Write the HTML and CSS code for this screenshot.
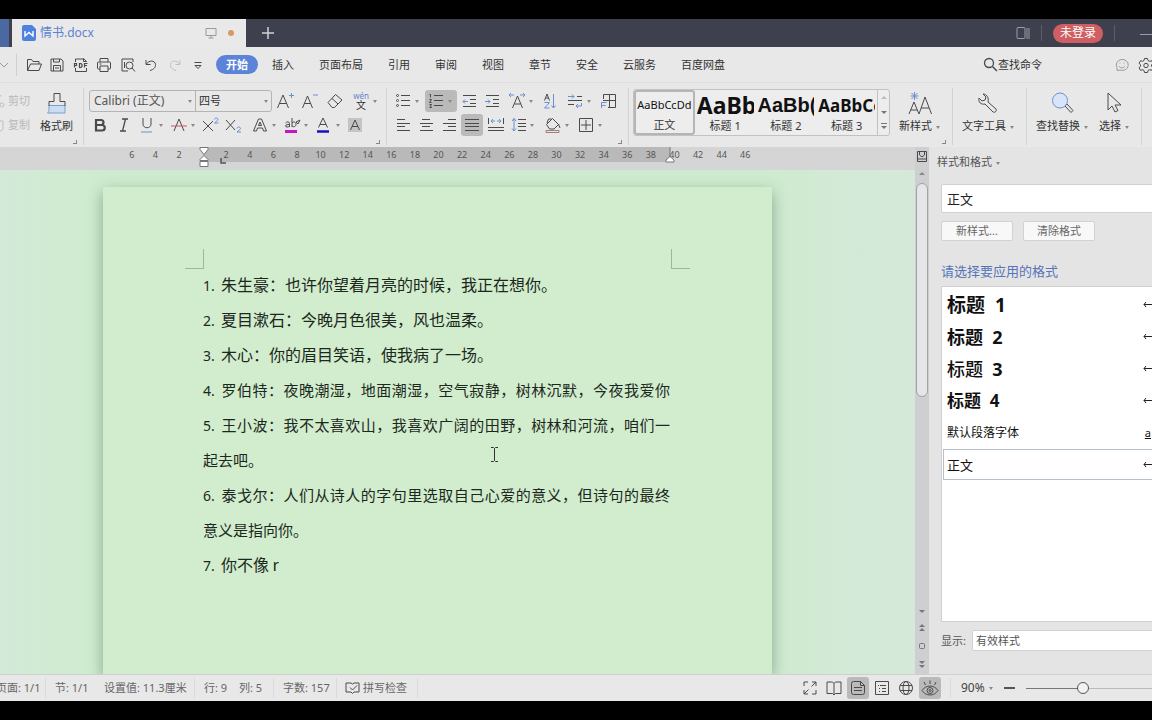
FILE: index.html
```html
<!DOCTYPE html>
<html lang="zh-CN">
<head>
<meta charset="utf-8">
<title>情书.docx</title>
<link rel="stylesheet" href="styles.css">
</head>
<body>
<div class="app">
  <header class="titlebar">
    <div class="home-tab"></div>
    <div class="doc-tab">
      <svg class="doc-logo" width="14" height="16" viewBox="0 0 14 16"><path d="M2 0h8l4 4v10a2 2 0 0 1-2 2H2a2 2 0 0 1-2-2V2a2 2 0 0 1 2-2z" fill="#4f82e0"/><path d="M3 6v5l4-3.500 4 3.500V6" fill="none" stroke="#fff" stroke-width="1.400"/></svg>
      <span class="doc-name">情书.docx</span>
      <svg width="12" height="12" viewBox="0 0 12 12" class="ln grey"><path d="M1 1.500h10v7H1zM6 8.500v2.500M3.500 11h5"/></svg>
      <span class="dirty"></span>
    </div>
    <button class="new-tab" aria-label="新建"><svg width="12" height="12" viewBox="0 0 12 12"><path d="M6 0v12M0 6h12" stroke="#d0d0d6" stroke-width="1.500"/></svg></button>
    <div class="title-right">
      <svg width="14" height="14" viewBox="0 0 14 14" fill="none" stroke="#9b9ca8"><rect x="1" y="1.500" width="8" height="11" rx="1"/><path d="M11 2v11M13 2v11"/></svg>
      <i class="tsep"></i>
      <button class="login">未登录</button>
      <i class="tsep"></i>
      <svg class="minimize" width="12" height="12" viewBox="0 0 12 12"><path d="M0 7.500h12" stroke="#9b9ca8"/></svg>
    </div>
  </header>

  <nav class="menubar">
    <svg class="ln grey chev" width="10" height="6" viewBox="0 0 10 6"><path d="M1 1l4 4 4-4"/></svg>
    <i class="msep"></i>
    <div class="quick">
      <button aria-label="打开"><svg class="ln" width="16" height="16" viewBox="0 0 16 16"><path d="M1.500 13.500v-11h4l1.500 2h6v2.500M1.500 13.500l3-6.500h11l-2.500 6.500z"/></svg></button>
      <button aria-label="保存"><svg class="ln" width="16" height="16" viewBox="0 0 16 16"><path d="M2 2h10l2 2v10H2zM4.500 2v3h6V2M4.500 14V8.500h7V14M6 11h4"/></svg></button>
      <button aria-label="输出为PDF"><svg class="ln" width="16" height="16" viewBox="0 0 16 16"><path d="M2.500 5V2H11l2.500 2.500V5M2.500 11v3.500h11V11M10.500 1.500v3h3"/><path d="M1.500 10.500v-4h2v2h-2M6.500 6.500v4h1.500l1-1v-2l-1-1zM11.500 10.500v-4h3M11.500 8.500h2.500" stroke-width="1.200"/></svg></button>
      <button aria-label="打印"><svg class="ln" width="16" height="16" viewBox="0 0 16 16"><path d="M4 5V1.500h8V5M4 12H2.500a1 1 0 0 1-1-1V6a1 1 0 0 1 1-1h11a1 1 0 0 1 1 1v5a1 1 0 0 1-1 1H12M4 9h8v5.500H4zM3.500 7h2"/></svg></button>
      <button aria-label="打印预览"><svg class="ln" width="16" height="16" viewBox="0 0 16 16"><path d="M13 5V2H2v12h6"/><circle cx="9.500" cy="8.500" r="3.500"/><path d="M12 11l3 3.500M4.500 5v6"/></svg></button>
      <button aria-label="撤销"><svg class="ln" width="16" height="16" viewBox="0 0 16 16"><path d="M3 3v4.500h4.500M3.500 7C6 3 12 3 12.500 7.500c.3 3-2 5-5.500 6"/></svg></button>
      <button aria-label="恢复"><svg class="ln faint" width="16" height="16" viewBox="0 0 16 16"><path d="M13 3v4.500H8.500M12.500 7C10 3 4 3 3.500 7.500c-.3 3 2 5 5.500 6"/></svg></button>
      <button aria-label="自定义"><svg class="ln" width="12" height="12" viewBox="0 0 12 12"><path d="M2.500 3.500h7M3 6.500h6l-3 3z"/></svg></button>
    </div>
    <div class="menus">
      <button class="on">开始</button><button>插入</button><button>页面布局</button><button>引用</button><button>审阅</button><button>视图</button><button>章节</button><button>安全</button><button>云服务</button><button>百度网盘</button>
    </div>
    <button class="find-cmd"><svg class="ln" width="15" height="15" viewBox="0 0 15 15"><circle cx="6" cy="6" r="4.500" stroke-width="1.300"/><path d="M9.500 9.500l4.500 4.500" stroke-width="1.500"/></svg>查找命令</button>
    <svg class="ln grey smile" width="14" height="14" viewBox="0 0 14 14"><path d="M2 12.500V9.500A6 5.500 0 1 1 5 12zM4 8c1.500 2.500 4.500 2.500 6 0M5 4.500v1M9 4.500v1"/></svg>
    <svg class="ln gear" width="16" height="16" viewBox="0 0 16 16"><path d="M6.500 1.500h3l.5 2 1.500.8 2-.6 1.500 2.600-1.500 1.400v1.600l1.500 1.400-1.500 2.600-2-.6-1.500.8-.5 2h-3l-.5-2-1.500-.8-2 .6L1 10.700l1.500-1.400V7.700L1 6.300l1.500-2.600 2 .6L6 3.500z"/><circle cx="8" cy="8.500" r="2.200"/></svg>
  </nav>

  <section class="ribbon">
    <div class="group clip-group">
      <div class="clip-col">
        <button class="dim"><svg class="ln faint" width="14" height="14" viewBox="0 0 14 14"><path d="M2 1l8 9M10 1L4 10"/><circle cx="3" cy="11" r="2"/><circle cx="11" cy="11" r="2"/></svg>剪切</button>
        <button class="dim"><svg class="ln faint" width="14" height="14" viewBox="0 0 14 14"><path d="M2 9V1h7M5 3h7v8l-2 2H5z"/></svg>复制</button>
      </div>
      <button class="big"><svg class="ln" width="22" height="24" viewBox="0 0 22 24"><path d="M3 14.500h16V22H1.500c1-1 1.500-2 1.500-4z" fill="#cbdcf3" stroke="#7d9fd2"/><path d="M3 15v-4.500h5V2.500h6v8h5V15"/></svg><span>格式刷</span></button>
      <i class="launch"></i>
    </div>
    <div class="group font-group">
      <div class="row row-wide">
        <div class="combos">
          <label class="combo grow"><select aria-label="字体"><option>Calibri (正文)</option></select></label>
          <label class="combo size"><select aria-label="字号"><option>四号</option></select></label>
        </div>
        <button class="ic" aria-label="增大字号"><svg class="ln" width="20" height="20" viewBox="0 0 20 20"><path d="M1.500 17L7 4l5.500 13M3.500 12.500h7"/><path class="blue" d="M15.500 2v5M13 4.500h5"/></svg></button>
        <button class="ic" aria-label="减小字号"><svg class="ln" width="20" height="20" viewBox="0 0 20 20"><path d="M1.500 17l5-12 5 12M3.500 12.500h6"/><path class="blue" d="M12 4h5"/></svg></button>
        <button class="ic" aria-label="清除格式"><svg class="ln" width="18" height="18" viewBox="0 0 18 18"><path d="M1 10.500L8.500 2.500l6.500 5.500-7.500 7.500H5zM5 6.500l6 5.500"/></svg></button>
        <button class="ic c" aria-label="拼音指南"><span class="pinyin"><small>wén</small><b>文</b></span></button>
      </div>
      <div class="row">
        <button class="ic w" aria-label="加粗"><svg class="ln" width="16" height="16" viewBox="0 0 16 16"><path d="M4 3h5a2.500 2.500 0 0 1 0 5H4zM4 8h6a2.700 2.700 0 0 1 0 5.500H4z" stroke-width="2.200"/></svg></button>
        <button class="ic w" aria-label="倾斜"><svg class="ln" width="16" height="16" viewBox="0 0 16 16"><path d="M6 2h6M4 14h6M9.500 2l-3 12" stroke-width="1.300"/></svg></button>
        <button class="ic c" aria-label="下划线"><svg class="ln" width="16" height="18" viewBox="0 0 16 18"><path d="M4 2v6c0 5 8 5 8 0V2"/><path class="blue" d="M2 16h11"/></svg></button>
        <button class="ic c" aria-label="删除线"><svg class="ln" width="18" height="18" viewBox="0 0 18 18"><path d="M4 15L9 3l5 12"/><path d="M1 10h16" stroke="#cf5060"/></svg></button>
        <button class="ic" aria-label="上标"><svg class="ln" width="18" height="18" viewBox="0 0 18 18"><path d="M1 5l10 10M11 5L1 15"/><path class="blue" d="M12.500 3.500c0-2 3.500-2 3.500 0 0 1-2 2-3.500 3.500h4"/></svg></button>
        <button class="ic" aria-label="下标"><svg class="ln" width="18" height="18" viewBox="0 0 18 18"><path d="M2 4l9 10M11 4L2 14"/><path class="blue" d="M13 12.500c0-2 3.500-2 3.500 0 0 1-2 2-3.500 3.500h4"/></svg></button>
        <button class="ic c gapl" aria-label="文字效果"><svg class="ln" width="16" height="16" viewBox="0 0 16 16"><path d="M1.500 14L6.500 2h3l5 12h-3l-1-3h-5l-1 3zM6.500 8.500h3L8 5z"/></svg></button>
        <button class="ic c" aria-label="突出显示"><svg class="ln" width="18" height="18" viewBox="0 0 18 18"><path d="M2.500 7c1-1.500 4-1.500 4 .5V11M6.500 8.500c-2 0-4 .2-4 1.500s3 1.500 4 0M9 2v9M9 7c1.500-2 4-1 4 1.300S10.500 11.500 9 10M13 6l4-2-2 4z"/><path d="M2 15.500h12" stroke="#c316c9" stroke-width="3"/></svg></button>
        <button class="ic c" aria-label="字体颜色"><svg class="ln" width="18" height="18" viewBox="0 0 18 18"><path d="M3.500 11.500L8 2l4.500 9.500M5 8.500h6"/><path d="M2 15.500h12" stroke="#1a12b8" stroke-width="2.500"/></svg></button>
        <button class="ic" aria-label="字符底纹"><svg class="ln" width="16" height="16" viewBox="0 0 16 16"><path d="M0 1h14v14H0z" fill="#c4c4c4" stroke="none"/><path d="M2.500 13L7 3l4.500 10M4 9.500h6"/></svg></button>
      </div>
      <i class="launch"></i>
    </div>
    <div class="group para-group">
      <div class="row">
        <button class="ic c" aria-label="项目符号"><svg class="ln" width="16" height="16" viewBox="0 0 16 16"><path d="M6 2.500h9M6 7.500h9M6 12.500h9"/><circle cx="2.500" cy="2.500" r="1"/><circle cx="2.500" cy="7.500" r="1"/><circle cx="2.500" cy="12.500" r="1"/></svg></button>
        <button class="ic c hl" aria-label="编号"><svg class="ln" width="16" height="16" viewBox="0 0 16 16"><path d="M6 2.500h9M6 7.500h9M6 12.500h9M1.500 2l1-1v3.500M1.500 6.500h2l-2 3h2M1.500 11.500h2l-1 1.500 1 1.500h-2"/></svg></button>
        <button class="ic" aria-label="减少缩进"><svg class="ln" width="16" height="16" viewBox="0 0 16 16"><path d="M2 2.500h13M9 6.500h6M9 10.500h6M2 13.500h13"/><path class="blue" d="M7 8.500H2M4 6.500l-2 2 2 2"/></svg></button>
        <button class="ic" aria-label="增加缩进"><svg class="ln" width="16" height="16" viewBox="0 0 16 16"><path d="M2 2.500h13M9 6.500h6M9 10.500h6M2 13.500h13"/><path class="blue" d="M1 8.500h5M4 6.500l2 2-2 2"/></svg></button>
        <button class="ic c tabs" aria-label="字符缩放"><svg class="ln" width="18" height="18" viewBox="0 0 18 18"><path d="M4.500 16L9.500 4l5 12M6.500 12h6"/><path class="blue" d="M1 3h5M3 1L1 3l2 2M12 3h5M15 1l2 2-2 2"/></svg></button>
        <button class="ic" aria-label="排序"><svg class="ln" width="16" height="16" viewBox="0 0 16 16"><path d="M2.500 7.500L5 1l2.500 6.500M3.500 5h3"/><path class="blue" d="M2.500 9.500h5L2.500 15h5M11.500 1v14M9.500 12.500l2 2.500 2-2.500"/></svg></button>
        <button class="ic c tabs" aria-label="制表位"><svg class="ln" width="16" height="16" viewBox="0 0 16 16"><path d="M10 3.500h5M1 7.500h14M1 11.500h6"/><path class="blue" d="M1 3.500h6M5 1.500l2 2-2 2M14.500 10v3H9M11 11l-2 2 2 2"/></svg></button>
        <button class="ic" aria-label="表格布局"><svg class="ln" width="18" height="18" viewBox="0 0 18 18"><path d="M4.500 7V2.500h12v13H9M4 8.500h12M10.500 2v13"/><path class="blue" d="M2.500 16v-5.500h5M2.500 13.500h4"/></svg></button>
      </div>
      <div class="row">
        <button class="ic" aria-label="左对齐"><svg class="ln" width="16" height="16" viewBox="0 0 16 16"><path d="M2 2.500h8M2 6.500h13M2 9.500h8M2 13.500h13"/></svg></button>
        <button class="ic" aria-label="居中"><svg class="ln" width="16" height="16" viewBox="0 0 16 16"><path d="M4 2.500h8M2 6.500h13M4 9.500h8M2 13.500h13"/></svg></button>
        <button class="ic" aria-label="右对齐"><svg class="ln" width="16" height="16" viewBox="0 0 16 16"><path d="M7 2.500h8M2 6.500h13M7 9.500h8M2 13.500h13"/></svg></button>
        <button class="ic hl" aria-label="两端对齐"><svg class="ln" width="16" height="16" viewBox="0 0 16 16"><path d="M1 2.500h14M1 6.500h14M1 9.500h14M1 13.500h14"/></svg></button>
        <button class="ic" aria-label="分散对齐"><svg class="ln" width="18" height="16" viewBox="0 0 18 16"><path d="M2.500 1v6M17.500 1v6M2 10.500h16M2 13.500h16"/><path class="blue" d="M5 4h4M7 2L5 4l2 2M11 4h4M13 2l2 2-2 2"/></svg></button>
        <button class="ic c" aria-label="行距"><svg class="ln" width="16" height="16" viewBox="0 0 16 16"><path d="M8 2.500h8M8 6.500h8M8 9.500h8M8 13.500h8"/><path class="blue" d="M4 1.500v12M2 4l2-2.500L6 4M2 11.500L4 14l2-2.500"/></svg></button>
        <button class="ic c tabs" aria-label="底纹颜色"><svg class="ln" width="18" height="18" viewBox="0 0 18 18"><path d="M2.500 8.500L8.500 2.500l6 6-4.500 4.500H5.500zM3 7l1.500-4h3M14.500 8l1.500 4"/><path d="M2 14.500h13v2H2z" stroke="#a27d78"/></svg></button>
        <button class="ic c" aria-label="边框"><svg class="ln" width="16" height="16" viewBox="0 0 16 16"><path d="M1.500 1.500h13v13h-13zM8 3v10M3 8h10"/></svg></button>
      </div>
      <i class="launch"></i>
    </div>
    <div class="group style-group">
      <div class="gallery">
        <button class="st sel"><b class="p0">AaBbCcDd</b><span>正文</span></button>
        <button class="st"><b class="p1">AaBb</b><span>标题 1</span></button>
        <button class="st"><b class="p2">AaBb(</b><span>标题 2</span></button>
        <button class="st"><b class="p3">AaBbCc</b><span>标题 3</span></button>
        <div class="gal-nav"><i class="up"></i><i class="dn"></i><i class="dn more"></i></div>
      </div>
      <button class="big"><svg class="ln" width="24" height="24" viewBox="0 0 24 24"><path d="M1 23l5-12 5 12M3 19h6M11 23l6-17 6.500 17M13 17h8"/><path class="blue" d="M6.500 1v8M2.500 5h8M3.500 2l6 6M9.500 2l-6 6"/></svg><span class="car">新样式</span></button>
      <i class="launch"></i>
    </div>
    <div class="group tool-group">
      <button class="big"><svg class="ln" width="22" height="22" viewBox="0 0 22 22"><path d="M6 2l3 3-1 3-3 1-3-3c-1 4 2 7 6 6l8 8c2 1 4-1 3-3l-8-7c1-4-1-8-5-8z"/></svg><span class="car">文字工具</span></button>
    </div>
    <div class="group find-group">
      <button class="big"><svg class="ln" width="24" height="24" viewBox="0 0 24 24"><path d="M15 15l2-2 6 6.500-2 2z"/><circle cx="10" cy="9.500" r="7.500" fill="#d8e5f8" stroke="#6e8fca"/></svg><span class="car">查找替换</span></button>
      <button class="big"><svg class="ln" width="18" height="24" viewBox="0 0 18 24"><path d="M3 2v17l4-4 3 6 3-1.500-3-5.500h6z"/></svg><span class="car">选择</span></button>
    </div>
  </section>

  <main class="work">
    <section class="editor">
      <div class="ruler">
        <div class="ruler-active"></div>
        <div class="ticks"><span>6</span><span>4</span><span>2</span><span></span><span>2</span><span>4</span><span>6</span><span>8</span><span>10</span><span>12</span><span>14</span><span>16</span><span>18</span><span>20</span><span>22</span><span>24</span><span>26</span><span>28</span><span>30</span><span>32</span><span>34</span><span>36</span><span>38</span><span>40</span><span>42</span><span>44</span><span>46</span></div>
        <svg class="indent-l" width="10" height="20" viewBox="0 0 10 20"><path d="M1 .5h8v2L5 7.500 1 2.500zM5 8.500l4 4v1H1v-1zM1 14.500h8v5H1z" fill="#fff" stroke="#777"/></svg>
        <svg class="tab-stop" width="6" height="6" viewBox="0 0 6 6"><path d="M1 0v5h5" fill="none" stroke="#555" stroke-width="1.500"/></svg>
        <svg class="indent-r" width="10" height="16" viewBox="0 0 10 16"><path d="M5 0v9" stroke="#777"/><path d="M5 9.500l4 3.500v2H1v-2z" fill="#fff" stroke="#777"/></svg>
      </div>
      <div class="canvas">
        <article class="page">
          <i class="crop left"></i><i class="crop right"></i>
          <ol class="text">
            <li><span class="num">1.</span>朱生豪：也许你望着月亮的时候，我正在想你。</li>
            <li><span class="num">2.</span>夏目漱石：今晚月色很美，风也温柔。</li>
            <li><span class="num">3.</span>木心：你的眉目笑语，使我病了一场。</li>
            <li class="full only"><span class="num">4.</span>罗伯特：夜晚潮湿，地面潮湿，空气寂静，树林沉默，今夜我爱你</li>
            <li class="full"><span class="num">5.</span>王小波：我不太喜欢山，我喜欢广阔的田野，树林和河流，咱们一起去吧。</li>
            <li class="full"><span class="num">6.</span>泰戈尔：人们从诗人的字句里选取自己心爱的意义，但诗句的最终意义是指向你。</li>
            <li><span class="num">7.</span>你不像 r</li>
          </ol>
          <svg class="ibeam" width="9" height="15" viewBox="0 0 9 15"><path d="M1 .5h2.500l1 1 1-1H8M1 14.500h2.500l1-1 1 1H8M4.500 1.500v12" fill="none" stroke="#333"/></svg>
        </article>
      </div>
    </section>
    <div class="scroll">
      <svg class="ln" width="10" height="11" viewBox="0 0 10 11"><path d="M.5.500h9v10h-9zM.5 8h9M2.500 1v3L5 6l2.500-2V1"/></svg>
      <i class="up"></i>
      <div class="thumb"></div>
      <div class="scroll-nav">
        <i class="dn"></i>
        <svg width="6" height="8" viewBox="0 0 6 8" fill="#777"><path d="M3 0l3 3H0zM3 4l3 3H0z"/></svg>
        <svg width="6" height="6" viewBox="0 0 6 6" fill="none" stroke="#777"><rect x=".5" y=".5" width="5" height="5" rx="1"/></svg>
        <svg width="6" height="8" viewBox="0 0 6 8" fill="#777"><path d="M3 4L0 1h6zM3 8L0 5h6z"/></svg>
      </div>
    </div>
    <aside class="panel">
      <h2 class="car">样式和格式</h2>
      <input class="cur" aria-label="当前样式" value="正文">
      <div class="btns"><button>新样式...</button><button>清除格式</button></div>
      <h3>请选择要应用的格式</h3>
      <ul class="list">
        <li class="h1">标题 &nbsp;1<svg class="mark" width="12" height="8" viewBox="0 0 12 8"><path d="M1 3.500h11M3 1L1 3.500 3 6" fill="none" stroke="#222"/></svg></li>
        <li class="h2">标题 &nbsp;2<svg class="mark" width="12" height="8" viewBox="0 0 12 8"><path d="M1 3.500h11M3 1L1 3.500 3 6" fill="none" stroke="#222"/></svg></li>
        <li class="h3"><span>标题</span> &nbsp;3<svg class="mark" width="12" height="8" viewBox="0 0 12 8"><path d="M1 3.500h11M3 1L1 3.500 3 6" fill="none" stroke="#222"/></svg></li>
        <li class="h4">标题 &nbsp;4<svg class="mark" width="12" height="8" viewBox="0 0 12 8"><path d="M1 3.500h11M3 1L1 3.500 3 6" fill="none" stroke="#222"/></svg></li>
        <li class="def">默认段落字体<u class="mark">a</u></li>
        <li class="cursel">正文<svg class="mark" width="12" height="8" viewBox="0 0 12 8"><path d="M1 3.500h11M3 1L1 3.500 3 6" fill="none" stroke="#222"/></svg></li>
      </ul>
      <div class="show"><label for="show">显示:</label><select id="show"><option>有效样式</option></select></div>
    </aside>
  </main>

  <footer class="status">
    <span class="s1">页面: 1/1</span><span class="s2">节: 1/1</span><span class="s3">设置值: 11.3厘米</span><span class="s4">行: 9</span><span class="s5">列: 5</span><span class="s6">字数: 157</span>
    <button class="spell"><svg class="ln" width="15" height="13" viewBox="0 0 15 13"><path d="M7.500 11.500L6 10H1V1h5l1.500 1L9 1h5v9H9zM5 5.500l2.500 2.500L12 3.500"/></svg>拼写检查</button>
    <div class="views">
      <button aria-label="全屏"><svg class="ln" width="16" height="16" viewBox="0 0 16 16"><path d="M2 6V2h4M10 2h4v4M14 10v4h-4M6 14H2v-4M9.500 6.500L14 2M6.500 9.500L2 14"/></svg></button>
      <button aria-label="阅读"><svg class="ln" width="16" height="16" viewBox="0 0 16 16"><path d="M8 3.500L6.500 2H1v11.500h5.500L8 15l1.500-1.500H15V2H9.500zV14"/></svg></button>
      <button class="hl" aria-label="页面"><svg class="ln" width="16" height="16" viewBox="0 0 16 16"><path d="M3.500 1.500h7l4 4v7a2 2 0 0 1-2 2h-9a2 2 0 0 1-2-2v-9a2 2 0 0 1 2-2zM10.500 1.500v4h4M4 7.500h8M4 10.500h8"/></svg></button>
      <button aria-label="大纲"><svg class="ln" width="16" height="16" viewBox="0 0 16 16"><path d="M1.500 1.500h13v13h-13zM4 5.500h1M6 5.500h6M5 8.500h1M8 8.500h4M5 11.500h1M8 11.500h4"/></svg></button>
      <button aria-label="网页"><svg class="ln" width="16" height="16" viewBox="0 0 16 16"><circle cx="8" cy="8" r="6.500"/><ellipse cx="8" cy="8" rx="3" ry="6.500"/><path d="M2 5.500h12M2 10.500h12"/></svg></button>
      <button class="hl" aria-label="护眼"><svg class="ln" width="18" height="18" viewBox="0 0 18 18"><path d="M1 11.500c4-6 12-6 16 0-4 6-12 6-16 0zM9 5V1.500M4.500 6L3 3M13.500 6L15 3"/><circle cx="9" cy="11.500" r="3"/><circle cx="9" cy="11.500" r="1"/></svg></button>
    </div>
    <i class="ssep"></i>
    <button class="zoom car">90%</button>
    <button class="minus" aria-label="缩小"></button>
    <input class="slider" type="range" min="0" max="100" value="42" aria-label="缩放">
  </footer>
</div>
</body>
</html>
```
FILE: styles.css
```css
* { box-sizing: border-box; }
html, body { height: 100%; }
body {
  margin: 0;
  padding: 19px 0;
  background: #000;
  overflow: hidden;
  font: 11px/16px "Noto Sans", "Noto Sans CJK SC", sans-serif;
  color: #333;
}
button {
  border: 0;
  padding: 0;
  background: none;
  font: inherit;
  color: inherit;
  white-space: nowrap;
}
select, input { font: inherit; color: inherit; appearance: none; }
svg { display: block; flex: none; }
.ln { fill: none; stroke: #4a4a4c; }
.grey { stroke: #9a9a9a; }
.faint { stroke: #c0c0c0; }
.blue { stroke: #6a8fd0; }

.app {
  height: 100%;
  display: flex;
  flex-direction: column;
  overflow: hidden;
  background: #e8e8e8;
}

/* title bar */
.titlebar { flex: none; height: 28px; display: flex; align-items: center; background: #3f404d; }
.home-tab { width: 9px; height: 100%; background: #4b69a0; margin-right: 3px; }
.doc-tab {
  width: 234px;
  height: 100%;
  padding: 0 12px 0 10px;
  display: flex;
  align-items: center;
  background: #e9e9e9;
}
.doc-name { flex: 1; margin-left: 4px; font-size: 12px; color: #5c83cf; }
.dirty { width: 6px; height: 6px; margin-left: 11px; border-radius: 50%; background: #d59a63; }
.new-tab { margin-left: 16px; }
.title-right { margin-left: auto; display: flex; align-items: center; }
.tsep { width: 1px; height: 16px; margin: 0 11px; background: #5c5d69; }
.login { width: 50px; height: 19px; border-radius: 10px; background: #cf5f62; color: #fff; font-size: 12px; }
.minimize { margin-left: 14px; }

/* menu bar */
.menubar { flex: none; height: 36px; display: flex; align-items: center; border-bottom: 1px solid #dedede; }
.chev { margin-left: -1px; }
.msep { width: 1px; height: 22px; margin: 0 5px 0 7px; background: #d0d0d0; }
.quick { width: 188px; display: flex; }
.quick button { flex: 1; display: flex; align-items: center; justify-content: center; }
.menus { display: flex; align-items: center; gap: 25px; margin-left: 6px; }
.menus .on { width: 42px; height: 19px; margin-right: -11px; border-radius: 10px; background: #5b84d8; color: #fff; font-weight: bold; }
.find-cmd { display: flex; align-items: center; margin-left: auto; }
.smile { margin-left: 73px; }
.gear { margin: 0 -2px 0 9px; }

/* ribbon */
.ribbon { flex: none; height: 64px; display: flex; padding-top: 5px; overflow: hidden; }
.group { position: relative; height: 57px; border-right: 1px solid #d2d2d2; flex: none; }
.launch { position: absolute; right: 6px; bottom: 1px; width: 4px; height: 4px; border: solid #888; border-width: 0 1px 1px 0; }
.row { display: flex; align-items: center; height: 24px; margin-top: 1px; }
.row + .row { margin-top: 0; }
.row-wide { gap: 3px; }
.ic { position: relative; width: 22px; height: 22px; display: flex; align-items: center; justify-content: center; border-radius: 3px; }
.ic.w { width: 24px; }
.ic.c { width: 32px; padding-right: 10px; }
.ic.gapl { margin-left: 5px; }
.ic.tabs { margin-left: 2px; }
.ic.c::after { content: ""; position: absolute; right: 5px; top: 10px; border: 2px solid transparent; border-top: 3px solid #888; border-bottom: 0; }
.hl { background: #bababa; }

.clip-group { width: 84px; display: flex; }
.clip-col { display: flex; flex-direction: column; gap: 8px; margin: 5px 10px 0 -9px; }
.clip-col .dim { display: flex; align-items: center; gap: 3px; color: #b9b9b9; }
.big { display: flex; flex-direction: column; align-items: center; padding-top: 3px; height: 48px; }
.big svg { height: 24px; }
.big span { margin-top: 3px; }
.car::after { content: ""; display: inline-block; margin-left: 4px; vertical-align: middle; border: 2px solid transparent; border-top: 3px solid #888; border-bottom: 0; }

.font-group { width: 303px; padding-left: 4px; }
.combos { width: 183px; height: 22px; margin-left: 1px; display: flex; border: 1px solid #b4b4b4; border-radius: 3px; }
.combo { position: relative; display: flex; width: 75px; }
.combo.grow { flex: 1; border-right: 1px solid #b4b4b4; }
.combo select { width: 100%; border: 0; padding: 0 4px; background: none; font-size: 12px; color: #555; }
.combo.size select { padding: 0 3px; font-size: 11px; color: #333; }
.combo::after { content: ""; position: absolute; right: 3px; top: 9px; border: 2px solid transparent; border-top: 3px solid #888; border-bottom: 0; }
.pinyin { display: flex; flex-direction: column; align-items: center; }
.pinyin small { font-size: 8px; line-height: 8px; color: #5f86cc; }
.pinyin b { font-size: 10px; line-height: 11px; font-weight: normal; }

.para-group { width: 242px; padding-left: 5px; }
.para-group .row { gap: 1px; }

.style-group { width: 324px; padding-left: 4px; display: flex; gap: 9px; }
.gallery { width: 257px; height: 47px; margin-top: 1px; display: flex; border: 1px solid #c2c2c2; border-radius: 3px; background: #ededed; }
.st { flex: 1; min-width: 0; padding: 0 2px; display: flex; flex-direction: column; align-items: center; font-size: 11px; }
.st b { width: 100%; height: 28px; line-height: 31px; color: #111; text-align: left; overflow: hidden; }
.st.sel { padding: 0; border: 2px solid #b5b5b5; border-radius: 3px; }
.st.sel b { height: 26px; line-height: 26px; }
.st .p0 { font-size: 11px; font-weight: normal; text-align: center; }
.st .p1 { font-size: 23px; }
.st .p2 { font: bold 20px/31px "Liberation Sans", sans-serif; }
.st .p3 { font-size: 17px; }
.gal-nav { width: 12px; display: flex; flex-direction: column; justify-content: space-around; align-items: center; border-left: 1px solid #c2c2c2; }
.up { border: 3px solid transparent; border-bottom: 3px solid #888; border-top: 0; }
.dn { border: 3px solid transparent; border-top: 3px solid #777; border-bottom: 0; }
.gal-nav .up { border-bottom-color: #bbb; }
.gal-nav .more { position: relative; }
.gal-nav .more::before { content: ""; position: absolute; left: -3px; top: -6px; width: 6px; height: 1px; background: #777; }

.tool-group { width: 74px; padding-left: 9px; }
.find-group { width: 115px; padding-left: 9px; display: flex; gap: 11px; }

/* workspace */
.work { flex: 1; min-height: 0; display: flex; }
.editor { flex: 1; min-width: 0; display: flex; flex-direction: column; }
.ruler { position: relative; flex: none; height: 23px; background: #d5d5d6; }
.ruler-active { width: 467px; height: 15px; margin-left: 203px; background: #b9b9b9; }
.ticks { position: absolute; left: 120px; top: 0; width: 637px; display: flex; font-size: 9px; line-height: 15px; color: #555; }
.ticks span { flex: 1; text-align: center; }
.indent-l { position: absolute; left: 199px; top: 0; }
.tab-stop { position: absolute; left: 220px; top: 11px; }
.indent-r { position: absolute; left: 665px; top: 0; }
.canvas {
  flex: 1;
  min-height: 0;
  overflow: hidden;
  padding: 17px 143px 0 103px;
  background: linear-gradient(90deg, #d3e9da 0, #d1ebd4 40px, #cfebcf 100px, #cfebcf 780px, #d3ead7 840px, #d5e9d9 100%);
}
.page {
  position: relative;
  height: 100%;
  padding: 80px 102px 0 100px;
  background: #d1edce;
  box-shadow: 0 5px 14px #86a890;
}
.text { margin: 0; padding: 0; list-style: none; font: 16px/35px "Noto Sans CJK SC", sans-serif; color: #1d281d; }
.num { display: inline-block; width: 18px; font: 14px/16px "Noto Sans", sans-serif; text-align: left; text-align-last: left; }
.full { font-size: 15px; text-align: justify; }
.full.only { text-align-last: justify; white-space: nowrap; }
.crop { position: absolute; top: 62px; width: 19px; height: 20px; border: 0 solid #9db99b; border-bottom-width: 1px; }
.crop.left { left: 82px; border-right-width: 1px; }
.crop.right { right: 82px; border-left-width: 1px; }
.ibeam { position: absolute; left: 387px; top: 260px; }

.scroll { flex: none; width: 14px; display: flex; flex-direction: column; align-items: center; background: #cfcfd1; padding-top: 4px; }
.scroll .up { margin: 10px 0 8px; }
.thumb { width: 12px; height: 214px; border: 1px solid #a2a2a4; border-radius: 6px; background: #e6e6e8; }
.scroll-nav { margin: auto 0 6px; display: flex; flex-direction: column; align-items: center; gap: 11px; }

.panel { flex: none; width: 243px; margin-right: -20px; padding: 7px 0 0 12px; display: flex; flex-direction: column; background: #e4e4e4; }
.panel h2 { margin: 0 0 0 -4px; font-size: 11px; font-weight: normal; line-height: 16px; color: #555; }
.cur { width: 100%; height: 29px; margin-top: 14px; padding: 0 5px; border: 1px solid #d0d0d0; border-radius: 2px; background: #fff; font-size: 13px; color: #222; }
.btns { display: flex; gap: 10px; margin-top: 8px; }
.btns button { width: 72px; height: 20px; border: 1px solid #d2d2d2; border-radius: 2px; background: #f8f8f8; color: #666; }
.panel h3 { margin: 20px 0 5px; font-size: 13px; font-weight: normal; line-height: 20px; color: #5674b8; }
.list { flex: 1; margin: 0; padding: 2px 0 0 1px; border: 1px solid #d0d0d0; list-style: none; background: #fff; color: #111; }
.list li { height: 32px; padding: 0 16px 0 4px; display: flex; align-items: center; font-weight: bold; font-size: 18px; white-space: pre; }
.list .mark { margin-left: auto; font-size: 11px; }
.list .h1 { font-size: 19px; }
.list .h4 { font-size: 17px; }
.list .h3 span { font-weight: 500; }
.list .def { padding-right: 20px; font-size: 12px; font-weight: normal; }
.list .cursel { height: 31px; padding: 0 15px 0 3px; border: 1px solid #b5c0cc; font-size: 13px; font-weight: normal; }
.show { display: flex; align-items: center; gap: 6px; margin: 8px 0 23px; color: #555; }
.show select { flex: 1; height: 21px; border: 1px solid #d2d2d2; border-radius: 2px; background: #fff; padding: 0 3px; }

/* status bar */
.status { flex: none; height: 27px; display: flex; align-items: center; border-top: 1px solid #cfcfcf; background: #e8e8e8; color: #666; white-space: nowrap; overflow: hidden; }
.s1 { width: 50px; height: 20px; line-height: 20px; margin-left: -4px; border-right: 1px solid #dadada; }
.s2 { margin-left: 9px; width: 49px; }
.s3 { width: 91px; height: 20px; line-height: 20px; border-right: 1px solid #dadada; }
.s4 { margin-left: 9px; width: 35px; }
.s5 { width: 35px; height: 20px; line-height: 20px; border-right: 1px solid #dadada; }
.s6 { margin-left: 9px; width: 54px; height: 20px; line-height: 20px; border-right: 1px solid #dadada; }
.spell { display: flex; align-items: center; gap: 3px; height: 20px; padding: 0 10px 0 8px; border-right: 1px solid #dadada; }
.views { margin-left: auto; display: flex; gap: 2px; }
.views button { width: 22px; height: 22px; display: flex; align-items: center; justify-content: center; border-radius: 3px; }
.ssep { width: 1px; height: 20px; margin: 0 10px 0 9px; background: #dadada; }
.zoom { width: 33px; text-align: left; color: #444; font-size: 12px; }
.minus { width: 11px; height: 2px; margin: 0 11px 0 10px; background: #555; }
.slider { flex: none; width: 134px; height: 14px; margin: 0 -8px 0 0; background: linear-gradient(90deg, #777 0 45%, #bbb 45%) center / 100% 1px no-repeat; }
.slider::-webkit-slider-thumb { appearance: none; width: 12px; height: 12px; border: 1px solid #555; border-radius: 50%; background: #f2f2f2; }
```
